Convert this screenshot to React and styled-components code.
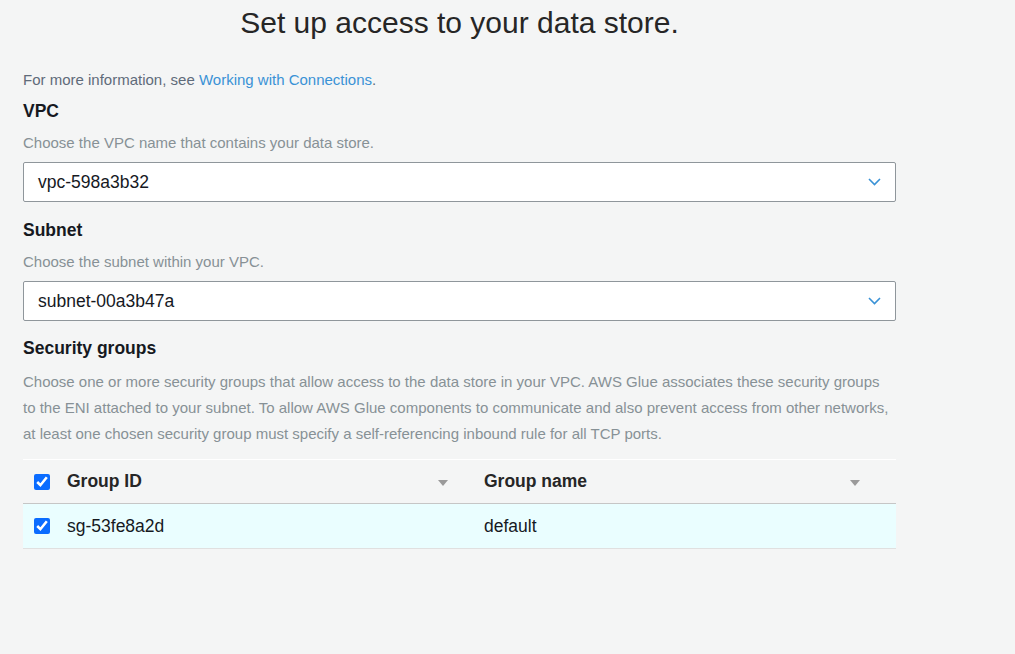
import React from 'react'
import styled, { createGlobalStyle } from 'styled-components'

const GlobalStyle = createGlobalStyle`
body {
    margin: 0;
    background-color: #f4f5f5;
    font-family: "Liberation Sans", Arial, sans-serif;
}
`;

const groups = [{ id: 'sg-53fe8a2d', name: 'default', selected: true }];

const Chevron = () => (
    <svg width="13" height="8" viewBox="0 0 13 8">
        <path d="M1 1 L6.5 6.5 L12 1" fill="none" stroke="#3a92d6" strokeWidth="1.6" />
    </svg>
);

const App = () => {
    return (
        <Page>
            <GlobalStyle />
            <Title>Set up access to your data store.</Title>
            <Info>
                For more information, see <Link href="#">Working with Connections</Link>.
            </Info>

            <Label>VPC</Label>
            <Hint>Choose the VPC name that contains your data store.</Hint>
            <Select>
                <span>vpc-598a3b32</span>
                <Chevron />
            </Select>

            <Label top={17}>Subnet</Label>
            <Hint>Choose the subnet within your VPC.</Hint>
            <Select>
                <span>subnet-00a3b47a</span>
                <Chevron />
            </Select>

            <Label top={16}>Security groups</Label>
            <LongHint>
                Choose one or more security groups that allow access to the data store in your VPC. AWS Glue associates these security groups
                to the ENI attached to your subnet. To allow AWS Glue components to communicate and also prevent access from other networks,
                at least one chosen security group must specify a self-referencing inbound rule for all TCP ports.
            </LongHint>

            <Table>
                <HeadRow>
                    <CheckCell><Check type="checkbox" checked readOnly /></CheckCell>
                    <HeadCell>Group ID<Caret /></HeadCell>
                    <HeadCell>Group name<Caret /></HeadCell>
                </HeadRow>
                {groups.map(g => (
                    <Row key={g.id} selected={g.selected}>
                        <CheckCell><Check type="checkbox" checked={g.selected} readOnly /></CheckCell>
                        <Cell>{g.id}</Cell>
                        <Cell>{g.name}</Cell>
                    </Row>
                ))}
            </Table>
        </Page>
    )
}

export default App;

const Page = styled.div`
width: 873px;
padding: 6px 0 40px 23px;
min-height: 608px;
`;
const Title = styled.h1`
margin: 0;
font-size: 30px;
line-height: 34px;
font-weight: normal;
color: #262626;
text-align: center;
`;
const Info = styled.div`
margin-top: 30px;
font-size: 15px;
line-height: 20px;
color: #5f6b7a;
`;
const Link = styled.a`
color: #3a92d6;
text-decoration: none;
`;
const Label = styled.div`
margin-top: ${p => p.top || 10}px;
font-size: 17.5px;
line-height: 22px;
font-weight: bold;
color: #16191f;
`;
const Hint = styled.div`
margin-top: 11px;
font-size: 15px;
line-height: 20px;
color: #879196;
`;
const LongHint = styled.div`
margin-top: 10px;
font-size: 15px;
line-height: 26px;
color: #879196;
`;
const Select = styled.div`
box-sizing: border-box;
margin-top: 9px;
height: 40px;
display: flex;
align-items: center;
justify-content: space-between;
padding: 0 14px 0 14px;
background-color: #fff;
border: 1px solid #8f969b;
border-radius: 2px;
font-size: 17.5px;
color: #16191f;
`;
const Table = styled.div`
margin-top: 12px;
border-top: 1px solid #fff;
`;
const HeadRow = styled.div`
display: grid;
grid-template-columns: 44px 417px 1fr;
height: 43px;
align-items: center;
border-bottom: 1px solid #c6c6c6;
`;
const Row = styled.div`
display: grid;
grid-template-columns: 44px 417px 1fr;
height: 44px;
align-items: center;
background-color: ${p => p.selected ? '#eafeff' : 'transparent'};
border-bottom: 1px solid #e0e0e0;
`;
const CheckCell = styled.div`
display: flex;
align-items: center;
padding-left: 11px;
`;
const Check = styled.input`
margin: 0;
width: 16px;
height: 16px;
accent-color: #0a6cff;
`;
const HeadCell = styled.div`
display: flex;
align-items: center;
justify-content: space-between;
padding-right: 36px;
font-size: 17.5px;
font-weight: bold;
color: #262626;
`;
const Cell = styled.div`
font-size: 17.5px;
color: #16191f;
`;
const Caret = styled.span`
width: 0;
height: 0;
border-left: 5px solid transparent;
border-right: 5px solid transparent;
border-top: 6px solid #9a9a9a;
margin-top: 2px;
`;
